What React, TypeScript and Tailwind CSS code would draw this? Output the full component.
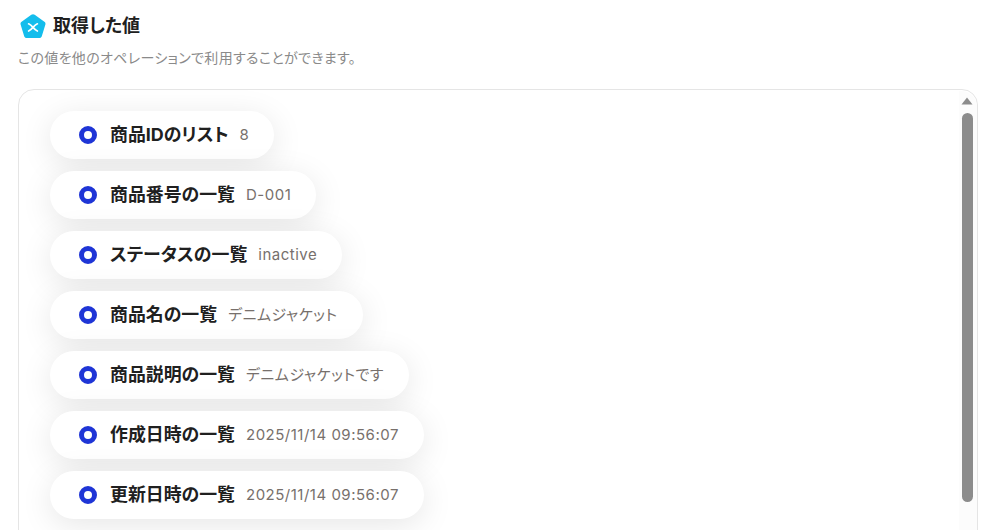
const rows = [
  { label: "商品IDのリスト", value: "8" },
  { label: "商品番号の一覧", value: "D-001" },
  { label: "ステータスの一覧", value: "inactive" },
  { label: "商品名の一覧", value: "デニムジャケット" },
  { label: "商品説明の一覧", value: "デニムジャケットです" },
  { label: "作成日時の一覧", value: "2025/11/14 09:56:07" },
  { label: "更新日時の一覧", value: "2025/11/14 09:56:07" },
];

function LogoMark() {
  return (
    <svg width="26" height="25" viewBox="0 0 26 25" className="shrink-0">
      <path
        d="M11.3 .7 L1.6 7.8 C.6 8.5 .3 9.6 .6 10.6 L4.2 22.2 C4.6 23.3 5.5 24 6.6 24 L19.4 24 C20.5 24 21.4 23.3 21.8 22.2 L25.4 10.6 C25.7 9.6 25.4 8.5 24.4 7.8 L14.7 .7 C13.7 0 12.3 0 11.3 .7 Z"
        fill="#14bdec"
      />
      <path d="M8.6 9.8 C10.4 10.6 11.8 12 13 13.4 C14.2 12 15.6 10.6 17.4 9.8 M8.6 17 C10.4 16.2 11.8 14.8 13 13.4 C14.2 14.8 15.6 16.2 17.4 17" stroke="#fff" strokeWidth="1.7" strokeLinecap="round" fill="none" />
    </svg>
  );
}

function ValuePill({ label, value }: { label: string; value: string }) {
  return (
    <div className="flex h-12 w-fit shrink-0 items-center rounded-3xl bg-white pl-[29px] pr-[25px] shadow-[0_6px_32px_rgba(0,0,0,0.1)]">
      <span className="h-[18px] w-[18px] shrink-0 rounded-full border-[5px] border-[#1f35d6]" />
      <span className="ml-[13px] text-[17.9px] font-bold text-[#202020] [font-feature-settings:'palt']">{label}</span>
      <span className="ml-[11px] text-[15px] tracking-[0.5px] text-[#77706c] [font-feature-settings:'palt']">{value}</span>
    </div>
  );
}

export default function App() {
  return (
    <div className="h-[530px] w-[986px] overflow-hidden bg-white font-['Inter','Noto_Sans_CJK_JP',sans-serif]">
      <div className="flex items-center gap-[7px] pl-[20px] pt-[12px]">
        <LogoMark />
        <h2 className="text-[18px] leading-7 font-bold text-[#202020] [font-feature-settings:'palt']">取得した値</h2>
      </div>
      <p className="mt-[8px] pl-[18px] text-[14px] leading-5 tracking-[0.33px] text-[#8a8a8a] [font-feature-settings:'palt']">この値を他のオペレーションで利用することができます。</p>

      <div className="relative mx-[18px] mt-[21px] h-[500px] w-[960px] rounded-2xl border border-[#e5e5e5]">
        <div className="flex h-full flex-col gap-3 overflow-hidden rounded-2xl pl-[31px] pt-[21px]">
          {rows.map((row) => (
            <ValuePill key={row.label} label={row.label} value={row.value} />
          ))}
        </div>
        <div className="absolute top-[1px] right-0 bottom-0 flex w-[18px] flex-col items-center rounded-tr-2xl bg-[#fcfcfc]">
          <svg width="12" height="8" viewBox="0 0 12 8" className="mt-[6px] mr-[2px]">
            <path d="M6 0.5 L11.5 7.5 L0.5 7.5 Z" fill="#8c8c8c" />
          </svg>
          <div className="mt-[8px] mr-[2px] h-[389px] w-[11px] rounded-full bg-[#8c8c8c]" />
        </div>
      </div>
    </div>
  );
}
